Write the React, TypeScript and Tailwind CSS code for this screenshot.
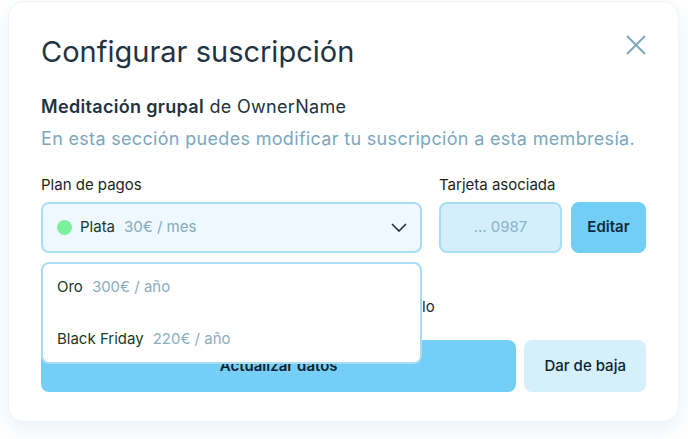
import { useState } from "react";

const plans = [
  { name: "Oro", price: "300€ / año" },
  { name: "Black Friday", price: "220€ / año" },
];

export default function App() {
  const [open] = useState(true);

  return (
    <div className="min-h-screen bg-white font-['Inter',sans-serif]">
      <div className="ml-2 mt-px w-[671px] h-[421px] rounded-2xl border border-[#edf5fa] bg-white px-8 pt-8 shadow-[0_8px_22px_rgba(40,90,130,0.09)]">
        {/* Header */}
        <div className="flex items-start justify-between">
          <h1 className="text-[29px] leading-9 font-normal text-[#1f3442]">
            Configurar suscripción
          </h1>
          <button className="mt-px">
            <svg width="20" height="20" viewBox="0 0 20 20" fill="none" stroke="#7ca8bd" strokeWidth="2">
              <line x1="1" y1="1" x2="19" y2="19" />
              <line x1="19" y1="1" x2="1" y2="19" />
            </svg>
          </button>
        </div>

        <div className="mt-[21px] text-lg leading-8 tracking-[0.32px]">
          <p className="text-[#1f3340]">
            <span className="font-semibold">Meditación grupal</span> de OwnerName
          </p>
          <p className="text-[#7ba8be]">En esta sección puedes modificar tu suscripción a esta membresía.</p>
        </div>

        {/* Fields */}
        <div className="mt-5 flex gap-[17px]">
          <div className="relative w-[383px]">
            <label className="block text-[15px] leading-5 text-[#1c1f22]">Plan de pagos</label>
            <button className="mt-[7px] flex h-[51px] w-full items-center rounded-lg border-2 border-[#a8ddf6] bg-[#eff8fe] pl-[14px] pr-[13px]">
              <span className="h-[15px] w-[15px] rounded-full bg-[#7cef9b]" />
              <span className="ml-2 text-[15px] text-[#173a24]">Plata</span>
              <span className="ml-[9px] text-[15px] text-[#86abbc]">30€ / mes</span>
              <svg className="ml-auto" width="16" height="9" viewBox="0 0 16 9" fill="none" stroke="#1b2e3a" strokeWidth="1.6">
                <polyline points="1,1 8,8 15,1" />
              </svg>
            </button>

            {open && (
              <div className="absolute left-0 top-[87px] z-10 flex w-full flex-col gap-[6px] rounded-lg border-2 border-[#a8ddf6] bg-white">
                {plans.map((p) => (
                  <div key={p.name} className="flex h-[46px] items-center pl-[14px] text-[15px]">
                    <span className="text-[#173a24]">{p.name}</span>
                    <span className="ml-[9px] text-[#8aaebf]">{p.price}</span>
                  </div>
                ))}
              </div>
            )}
          </div>

          <div>
            <label className="block text-[15px] leading-5 text-[#1c1f22]">Tarjeta asociada</label>
            <div className="mt-[7px] flex gap-[9px]">
              <div className="flex h-[51px] w-[123px] items-center justify-center rounded-lg border-2 border-[#a8ddf6] bg-[#d4eefb] text-[15px] text-[#8bb3c7]">
                ... 0987
              </div>
              <button className="h-[51px] w-[75px] rounded-lg bg-[#73cef5] text-[15px] font-semibold text-[#0f2b3b]">
                Editar
              </button>
            </div>
          </div>
        </div>

        {/* Auto-renew row (partly covered by the open dropdown) */}
        <div className="mt-[42px] flex items-center gap-2 text-[15px] leading-6 text-[#1c2b36]">
          <span className="h-4 w-4 rounded border-2 border-[#a8ddf6] bg-[#eff8fe]" />
          <span>Renovar automáticamente el plan al terminar el ciclo</span>
        </div>

        {/* Actions */}
        <div className="mt-[21px] flex gap-2">
          <button className="h-[52px] w-[477px] rounded-lg bg-[#74cef5] text-[15px] font-semibold text-[#10222e]">
            Actualizar datos
          </button>
          <button className="h-[52px] w-[122px] rounded-lg bg-[#d5effb] text-[15px] font-medium text-[#10222e]">
            Dar de baja
          </button>
        </div>
      </div>
    </div>
  );
}
